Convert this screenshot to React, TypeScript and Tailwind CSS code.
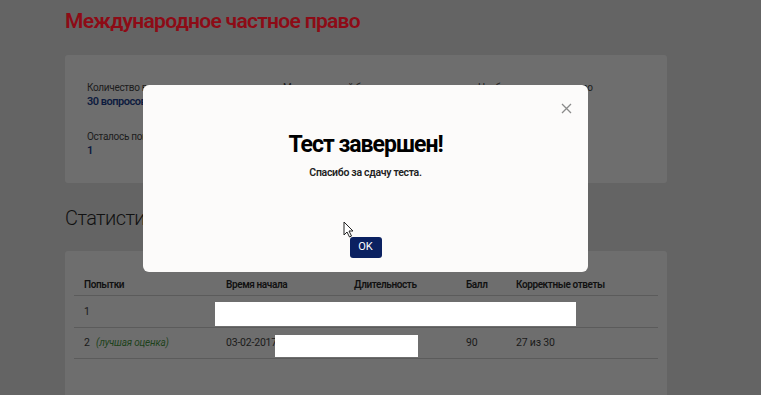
import React from 'react'

const InfoItem = ({ label, value }: { label: string; value: string }) => (
  <div className="min-w-0">
    <p className="text-[10px] leading-[12px] tracking-[-0.3px] text-[#1c1c1c] whitespace-nowrap">{label}</p>
    <p className="mt-[1px] text-[11px] leading-[13px] font-semibold tracking-[-0.5px] text-[#0d1b3e] whitespace-nowrap">
      {value}
    </p>
  </div>
)

const cols = 'grid grid-cols-[142px_128px_112px_50px_1fr] pl-[10px]'

export default function App() {
  return (
    <div
      className="relative w-[761px] h-[395px] overflow-hidden bg-[#646464]"
      style={{ fontFamily: 'Roboto, "Noto Sans", sans-serif' }}
    >
      <div className="ml-[65px] w-[602px]">
        <h1 className="pt-[7px] h-[35px] text-[21px] leading-[28px] font-semibold tracking-[-0.7px] text-[#8d0b16]">
          Международное частное право
        </h1>

        {/* summary card */}
        <div className="mt-[20px] h-[128px] rounded-[3px] bg-[#6e6e6e] pl-[22px] pt-[27px]">
          <div className="grid grid-cols-[196px_195px_1fr] gap-y-[23px]">
            <InfoItem label="Количество вопросов" value="30 вопросов" />
            <InfoItem label="Максимальный балл" value="100" />
            <InfoItem label="Необходимое количество" value="70" />
            <InfoItem label="Осталось попыток" value="1" />
          </div>
        </div>

        <h2 className="mt-[21px] text-[20px] leading-[28px] font-light tracking-[-0.6px] text-[#111]">Статистика</h2>

        {/* attempts card */}
        <div className="mt-[19px] h-[160px] rounded-[3px] bg-[#6e6e6e] px-[9px] pt-[19px]">
          <div className="text-[10.5px] tracking-[-0.2px] text-[#1a1a1a]">
            <div className={`${cols} h-[26px] pt-[7px] text-[10px] font-semibold tracking-[-0.4px] text-[#111] border-b border-[#5b5b5b]`}>
              <span>Попытки</span>
              <span>Время начала</span>
              <span>Длительность</span>
              <span>Балл</span>
              <span>Корректные ответы</span>
            </div>
            <div className={`relative ${cols} items-center h-[32px] border-b border-[#5b5b5b]`}>
              <span>1</span>
              <span />
              <span />
              <span />
              <span />
              <div className="absolute left-[141px] top-[6px] w-[361px] h-[24px] bg-white" />
            </div>
            <div className={`relative ${cols} items-center h-[31px] border-b border-[#5b5b5b]`}>
              <span>
                2 <i className="ml-[4px] text-[10px] text-[#1d421b]">(лучшая оценка)</i>
              </span>
              <span>03-02-2017</span>
              <span />
              <span>90</span>
              <span>27 из 30</span>
              <div className="absolute left-[201px] top-[7px] w-[143px] h-[22px] bg-white" />
            </div>
          </div>
        </div>
      </div>

      {/* modal */}
      <div className="absolute left-[143px] top-[85px] w-[445px] h-[187px] rounded-[6px] bg-[#fcfbfa]">
        <button className="absolute right-[16px] top-[18px] w-[11px] h-[11px] text-[#8a8a8a]">
          <svg viewBox="0 0 11 11" width="11" height="11" fill="none" stroke="currentColor" strokeWidth="1.3">
            <path d="M1 1L10 10M10 1L1 10" />
          </svg>
        </button>
        <div className="flex flex-col items-center pt-[45px]">
          <h3 className="text-[23px] leading-[30px] font-bold tracking-[-1px] text-black">Тест завершен!</h3>
          <p className="mt-[6px] text-[10.5px] leading-[14px] font-semibold tracking-[-0.3px] text-[#222]">
            Спасибо за сдачу теста.
          </p>
          <button className="mt-[57px] w-[32px] h-[21px] rounded-[3px] bg-[#0b2161] text-[11px] text-white">
            OK
          </button>
        </div>
      </div>

      {/* mouse cursor */}
      <svg className="absolute left-[343px] top-[221px]" width="11" height="17" viewBox="0 0 11 17">
        <path d="M1 1V14L4 11L6.5 16L8.5 15L6 10H10Z" fill="#fff" stroke="#222" strokeWidth="1" strokeLinejoin="round" />
      </svg>
    </div>
  )
}
